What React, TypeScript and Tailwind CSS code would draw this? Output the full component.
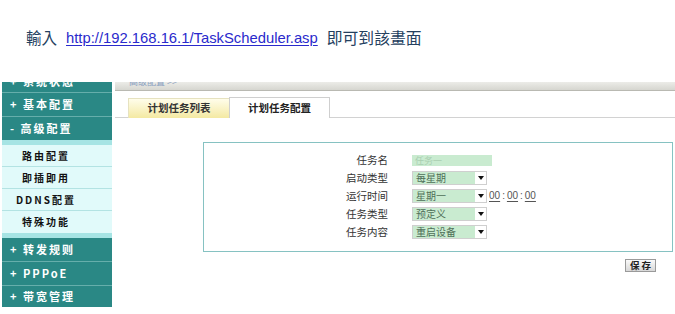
const cjk = { fontFamily: '"Noto Sans CJK SC", "Noto Sans", sans-serif' };
const cjkTc = { fontFamily: '"Noto Sans CJK TC", "Noto Sans", sans-serif' };

const Arrow = () => (
  <svg width="6" height="4" viewBox="0 0 6 4" className="block">
    <path d="M0 0 L6 0 L3 4 Z" fill="#111" />
  </svg>
);

const Select = ({ value }: { value: string }) => (
  <div className="w-[75px] h-[14px] border border-[#cfcfcf] bg-white flex items-stretch">
    <div className="w-[62px] bg-[#c9ebd0] flex items-center pl-[3px] text-[10px] text-[#4f6f58] leading-none">
      {value}
    </div>
    <div className="flex-1 flex items-center justify-center">
      <Arrow />
    </div>
  </div>
);

const Row = ({ label, children }: { label: string; children: React.ReactNode }) => (
  <div className="h-[18px] flex items-center">
    <div className="w-[184px] text-right text-[10.5px] text-[#333] leading-none">{label}</div>
    <div className="ml-[24px] flex items-center">{children}</div>
  </div>
);

const TealRow = ({ text, last }: { text: string; last?: boolean }) => (
  <div
    className={`${last ? 'h-[21px]' : 'h-[24px] border-b border-[#66aeab]'} bg-[#2a8885] flex items-center pl-[8px] text-white font-bold text-[11px] tracking-[2px] leading-none`}
  >
    {text}
  </div>
);

const SubRow = ({ text, last }: { text: string; last?: boolean }) => (
  <div
    className={`h-[22px] ${last ? '' : 'border-b border-[#b3e3e3]'} bg-[#e1fafa] flex items-center justify-center pr-[22px] text-[#111] font-bold text-[10px] tracking-[2px] leading-none`}
  >
    {text}
  </div>
);

export default function App() {
  return (
    <div className="w-[675px] h-[314px] bg-white overflow-hidden" style={cjk}>
      {/* caption */}
      <div className="h-[82px] pt-[28px] pl-[26px]">
        <div className="h-[20px] flex items-center text-[#24405e]">
          <span className="text-[15.5px] leading-none" style={cjkTc}>輸入</span>
          <a
            href="#"
            className="ml-[9px] text-[14.8px] leading-none text-[#2a2acc] underline underline-offset-2"
            style={{ fontFamily: '"Liberation Sans", Arial, sans-serif' }}
          >
            http://192.168.16.1/TaskScheduler.asp
          </a>
          <span className="ml-[9px] text-[15.8px] leading-none" style={cjkTc}>即可到該畫面</span>
        </div>
      </div>

      {/* router screenshot */}
      <div className="h-[225px] flex">
        <div className="ml-[2px] w-[110px] flex flex-col">
          <div className="h-[11px] border-b border-[#66aeab] bg-[#2a8885] overflow-hidden">
            <div className="h-[22px] -mt-[12px] flex items-center pl-[8px] text-white font-bold text-[11px] tracking-[2px] leading-none">
              + 系统状态
            </div>
          </div>
          <TealRow text="+ 基本配置" />
          <div className="h-[23px] bg-[#2a8885] flex items-center pl-[8px] text-white font-bold text-[11px] tracking-[2px] leading-none">
            - 高级配置
          </div>
          <div className="h-[5px] bg-[#a6e4e4]" />
          <SubRow text="路由配置" />
          <SubRow text="即插即用" />
          <SubRow text="DDNS配置" />
          <SubRow text="特殊功能" last />
          <div className="h-[5px] bg-[#a6e4e4]" />
          <TealRow text="+ 转发规则" />
          <TealRow text="+ PPPoE" />
          <TealRow text="+ 带宽管理" last />
        </div>

        <div className="ml-[3px] flex-1 flex flex-col">
          <div className="h-[9px] bg-gradient-to-b from-[#ecece8] to-[#d6d6d0] border-b border-[#b9b9b2] overflow-hidden">
            <div className="pl-[14px] -mt-[5px] text-[9px] text-[#8aa0c0] leading-none">高级配置 &gt;&gt;</div>
          </div>
          <div className="mt-[6px] h-[21px] flex pl-[13px] border-b border-[#d2d2d2]">
            <div className="w-[101px] h-[20px] mt-[1px] bg-gradient-to-b from-[#fffdea] to-[#f4e9a2] border-l border-t border-[#e6e2c0] flex items-center justify-center text-[10.5px] font-bold text-[#333] leading-none">
              计划任务列表
            </div>
            <div className="w-[101px] h-[21px] bg-white border-l border-t border-r border-[#cfcfcf] -mb-px flex items-center justify-center text-[10.5px] font-bold text-[#222] leading-none">
              计划任务配置
            </div>
          </div>

          <div className="mt-[24px] ml-[88px] w-[470px] h-[110px] border border-[#86c2c2] pt-[8px]">
            <Row label="任务名">
              <div className="w-[80px] h-[11px] bg-[#c9ebd0] flex items-center pl-[3px] text-[9px] text-[#a9cfb0] leading-none">
                任务一
              </div>
            </Row>
            <Row label="启动类型">
              <Select value="每星期" />
            </Row>
            <Row label="运行时间">
              <Select value="星期一" />
              <div
                className="ml-[2px] flex items-center text-[10px] text-[#555] leading-none"
                style={{ fontFamily: '"Liberation Sans", Arial, sans-serif' }}
              >
                <span className="underline underline-offset-2">00</span>
                <span className="px-[2px]">:</span>
                <span className="underline underline-offset-2">00</span>
                <span className="px-[2px]">:</span>
                <span className="underline underline-offset-2">00</span>
              </div>
            </Row>
            <Row label="任务类型">
              <Select value="预定义" />
            </Row>
            <Row label="任务内容">
              <Select value="重启设备" />
            </Row>
          </div>

          <div className="mt-[7px] flex justify-end pr-[19px]">
            <div className="w-[31px] h-[13px] border border-[#9a9a9a] bg-gradient-to-b from-[#fafafa] to-[#d8d8d8] flex items-center justify-center text-[9.5px] font-bold tracking-[2px] pl-[2px] text-[#222] leading-none">
              保存
            </div>
          </div>
        </div>
      </div>
    </div>
  );
}
